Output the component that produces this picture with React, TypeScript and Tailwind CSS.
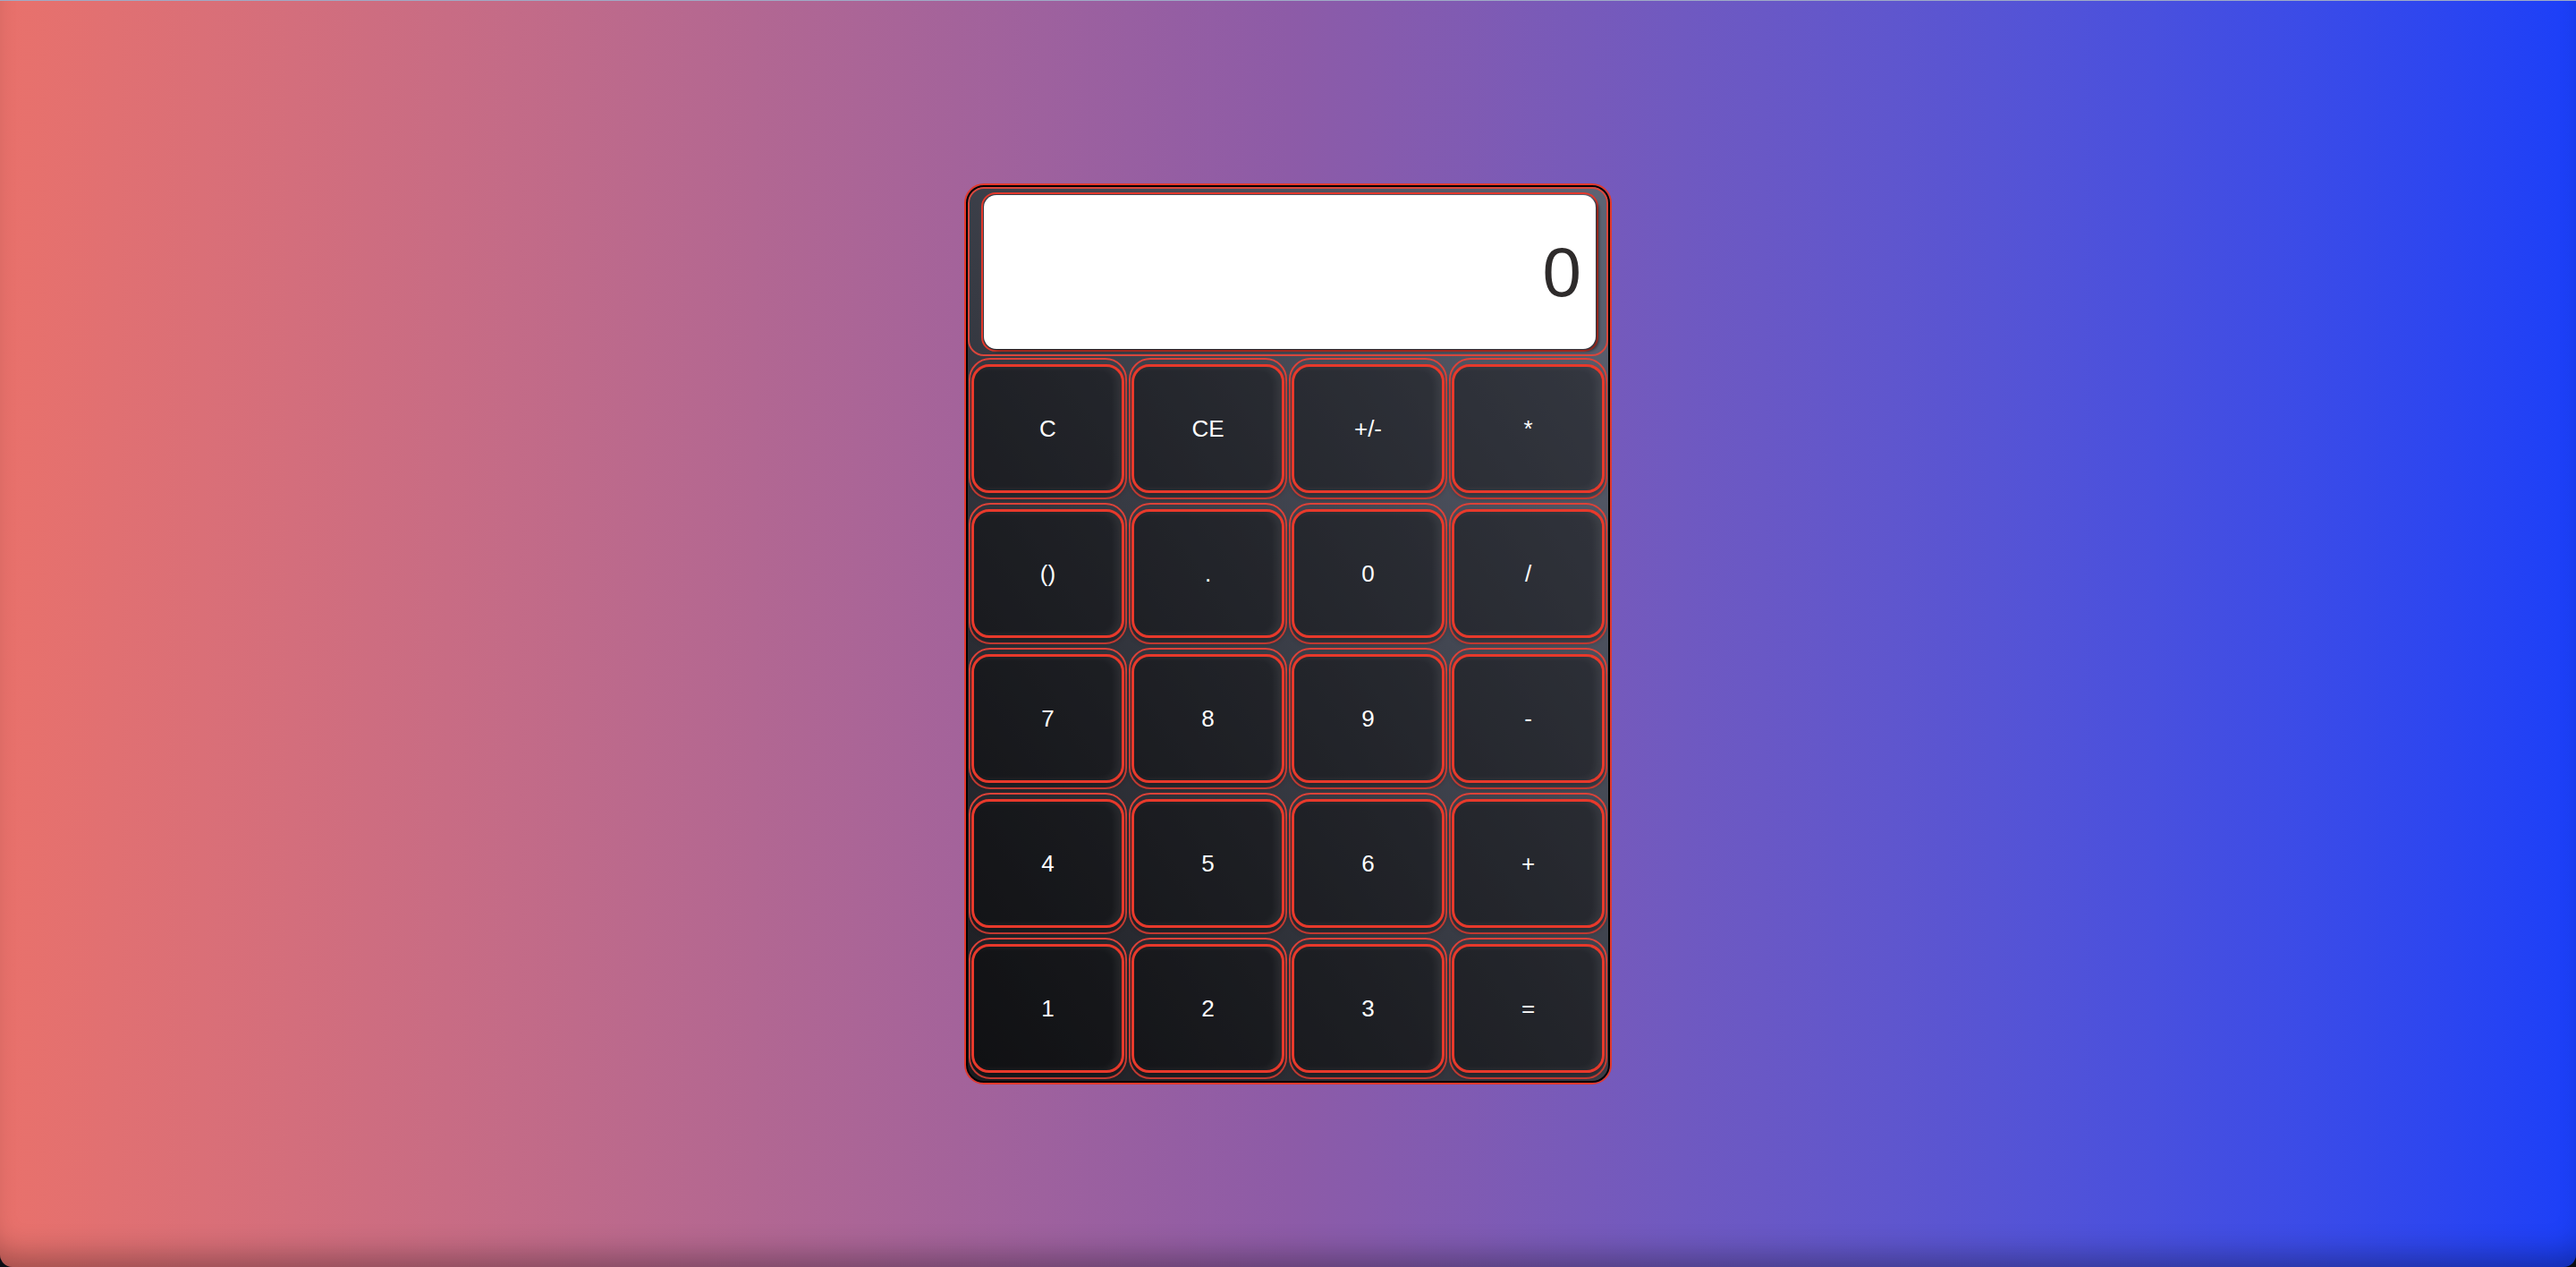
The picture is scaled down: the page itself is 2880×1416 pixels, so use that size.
const keys = ['C', 'CE', '+/-', '*', '()', '.', '0', '/', '7', '8', '9', '-', '4', '5', '6', '+', '1', '2', '3', '='];

export default function App() {
  return (
    <div className="h-screen w-full bg-[#0b0d14] font-['Liberation_Sans',Arial,sans-serif]">
      <div className="flex h-full items-center justify-center rounded-b-[14px] border-t border-[#9fabc6] bg-gradient-to-r from-[#e9716b] via-[#8d5ba7] to-[#1b3ff8] shadow-[inset_0_-30px_34px_-18px_rgba(0,0,0,0.32)]">
        {/* Calculator body */}
        <div className="w-[724px] rounded-[22px] border-2 border-[#e2392c]">
          <div className="overflow-hidden rounded-[20px] border-2 border-black bg-gradient-to-tr from-[#1b1c20] to-[#5e6474]">
            {/* Display */}
            <div className="rounded-[18px] border-2 border-[#d9463c] pb-[3px] pl-[13px] pr-[9px] pt-[4px]">
              <div className="rounded-[16px] border-2 border-[#e2392c] p-[1px]">
                <div className="flex h-[172px] items-center justify-end rounded-[14px] bg-white pr-[16px] text-[78px] leading-none text-[#2e2b2b] shadow-[4px_3px_3px_rgba(0,0,0,0.4)]">
                  0
                </div>
              </div>
            </div>

            {/* Keypad */}
            <div className="grid grid-cols-4">
              {keys.map(k => (
                <div key={k} className="h-[162px] px-[1px] py-[2px]">
                  <div className="h-full rounded-[24px] border-2 border-[#dc4238] px-[1px] py-[5px]">
                    <button className="flex h-full w-full items-center justify-center rounded-[20px] border-[3px] border-[#e8392b] bg-black/40 text-[26px] text-white shadow-[0_5px_6px_rgba(0,0,0,0.35),inset_-6px_0_8px_rgba(255,255,255,0.07)]">
                      {k}
                    </button>
                  </div>
                </div>
              ))}
            </div>
          </div>
        </div>
      </div>
    </div>
  );
}
